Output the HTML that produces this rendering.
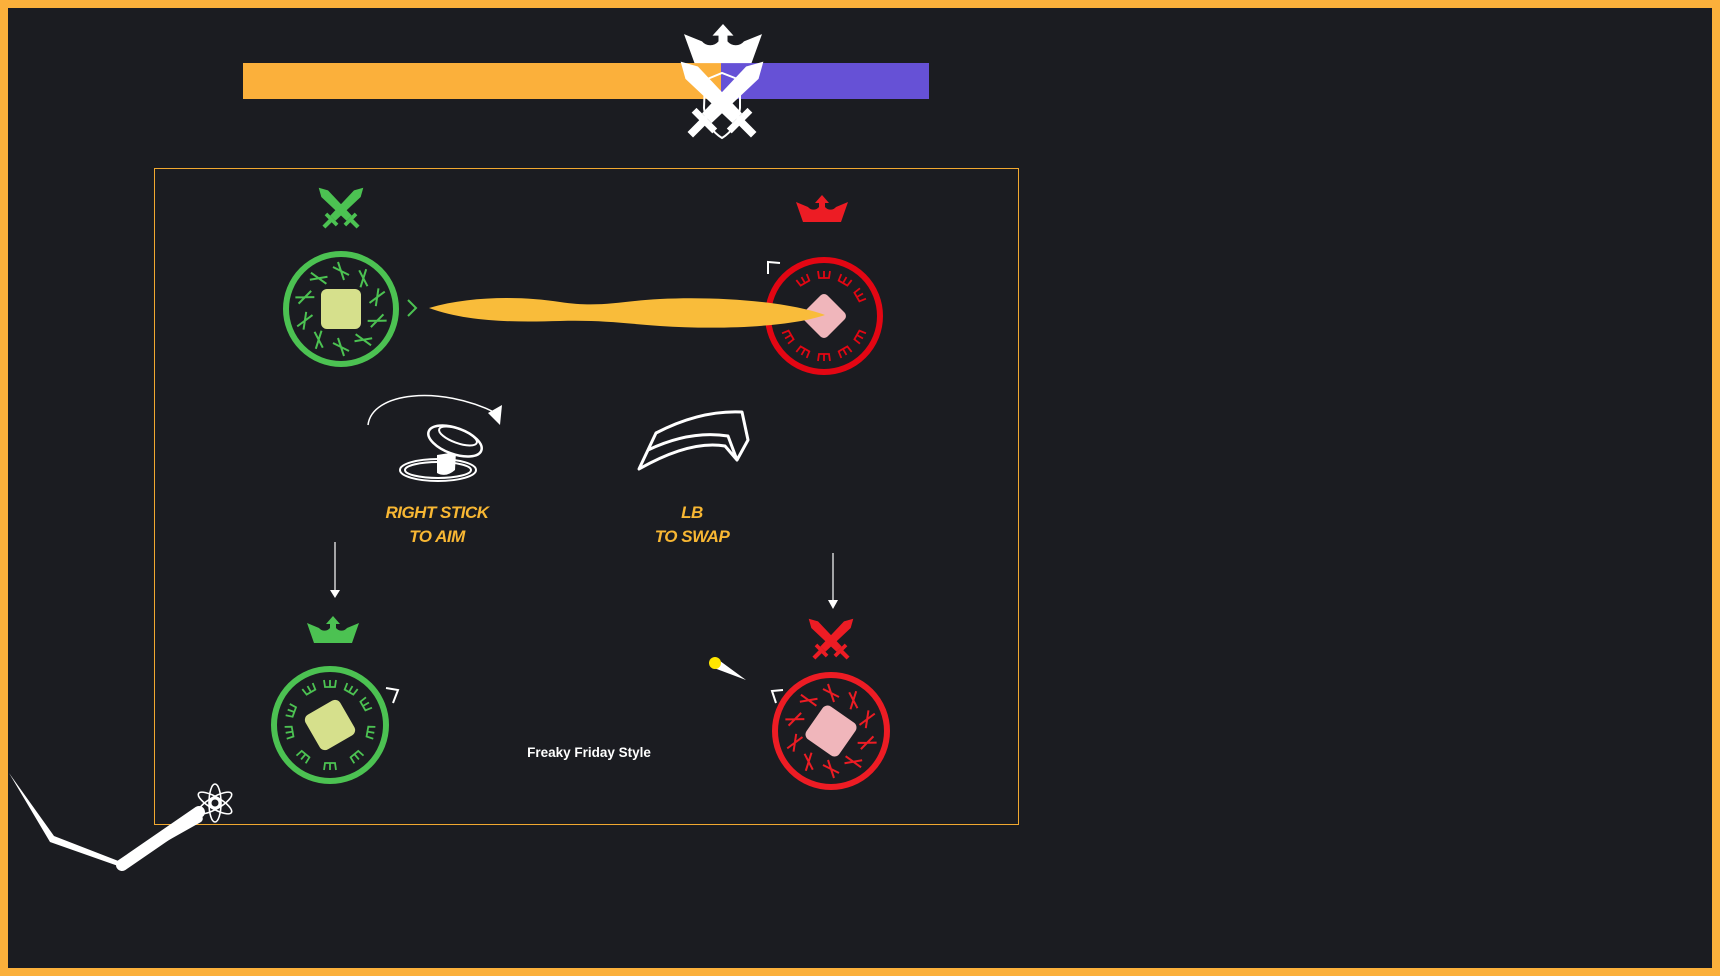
<!DOCTYPE html>
<html><head><meta charset="utf-8"><style>
html,body{margin:0;padding:0;background:#1b1c21;}
body{width:1720px;height:976px;overflow:hidden;position:relative;}
svg{position:absolute;left:0;top:0;}
.t{font-family:"Liberation Sans",sans-serif;}
</style></head><body>
<svg width="1720" height="976" viewBox="0 0 1720 976" xmlns="http://www.w3.org/2000/svg">
<defs>
<g id="sw"><path d="M0,-30 L4.5,-22 L3.5,11 L-3.5,11 L-4.5,-22 Z"/><rect x="-7.5" y="11" width="15" height="3.5"/><rect x="-2" y="14" width="4" height="9"/></g>
<g id="sws"><use href="#sw" transform="rotate(-45)"/><use href="#sw" transform="rotate(45)"/></g>
<path id="crown" d="M0,7 L12,12 A7,7 0 0 0 23,12 L23,8 L19,8 L26,0 L33,8 L29,8 L29,12 A7,7 0 0 0 40,12 L52,7 L45,27 L7,27 Z"/>
<g id="xm" fill="none" stroke-width="2"><path d="M-8,-4 L8,4 M-3,-9 L3,9"/></g>
<g id="tk" fill="none" stroke-width="1.8"><path d="M-6,-5 L-5,2 L5,2 L6,-5 M0,2 L0,-5"/></g>
</defs>
<rect x="4" y="4" width="1712" height="968" fill="none" stroke="#fbb03b" stroke-width="8"/>
<rect x="243" y="63" width="478" height="36" fill="#fbb03b"/>
<rect x="721" y="63" width="208" height="36" fill="#6651d6"/>
<g fill="#fff"><use href="#crown" transform="translate(684,24) scale(1.5,1.45)"/></g>
<path d="M705,80 L722,73 L740,80 L740,108 Q738,128 722,138 Q706,128 704,108 Z" fill="none" stroke="#fff" stroke-width="2"/>
<g fill="#fff" transform="translate(722,103) scale(1.95)"><use href="#sws"/></g>
<rect x="154.5" y="168.5" width="864" height="656" fill="none" stroke="#f0a830" stroke-width="1"/>
<g fill="#4cc252" transform="translate(341,210) scale(1.05)"><use href="#sws"/></g>
<circle cx="341" cy="309" r="55" fill="none" stroke="#4cc252" stroke-width="6"/>
<rect x="321" y="289" width="40" height="40" rx="6" fill="#d6e08c"/>
<g stroke="#4cc252" transform="translate(341,309)">
<use href="#xm" transform="rotate(0) translate(0,-38)"/><use href="#xm" transform="rotate(36) translate(0,-38)"/><use href="#xm" transform="rotate(72) translate(0,-38)"/><use href="#xm" transform="rotate(108) translate(0,-38)"/><use href="#xm" transform="rotate(144) translate(0,-38)"/><use href="#xm" transform="rotate(180) translate(0,-38)"/><use href="#xm" transform="rotate(216) translate(0,-38)"/><use href="#xm" transform="rotate(252) translate(0,-38)"/><use href="#xm" transform="rotate(288) translate(0,-38)"/><use href="#xm" transform="rotate(324) translate(0,-38)"/>
</g>
<path d="M408,300 L416,308 L408,316" fill="none" stroke="#4cc252" stroke-width="2"/>
<g fill="#ed1c24"><use href="#crown" transform="translate(796,195)"/></g>
<circle cx="824" cy="316" r="56" fill="none" stroke="#e30613" stroke-width="6"/>
<g stroke="#e30613" transform="translate(824,316)">
<use href="#tk" transform="rotate(-30) translate(0,-40)"/><use href="#tk" transform="rotate(0) translate(0,-40)"/><use href="#tk" transform="rotate(30) translate(0,-40)"/><use href="#tk" transform="rotate(60) translate(0,-40)"/><use href="#tk" transform="rotate(120) translate(0,-40)"/><use href="#tk" transform="rotate(150) translate(0,-40)"/><use href="#tk" transform="rotate(180) translate(0,-40)"/><use href="#tk" transform="rotate(210) translate(0,-40)"/><use href="#tk" transform="rotate(240) translate(0,-40)"/><use href="#tk" transform="rotate(270) translate(0,-40)"/>
</g>
<rect x="807" y="299" width="34" height="34" rx="5" fill="#f0b6bb" transform="rotate(45 824 316)"/>
<path d="M429,308 C470,296 520,296 560,302 C600,308 620,301 660,299 C720,296 790,302 825,315 C790,327 720,330 660,326 C620,323 600,320 560,321 C520,322 470,323 429,308 Z" fill="#f9bc3a"/>
<path d="M768,274 L768,262 L780,263" fill="none" stroke="#fff" stroke-width="2"/>
<path d="M368,425 C372,392 440,385 496,413" fill="none" stroke="#fff" stroke-width="1.5"/>
<path d="M488,413 L502,405 L500,425 Z" fill="#fff"/>
<ellipse cx="438" cy="470" rx="38" ry="11" fill="none" stroke="#fff" stroke-width="2"/>
<ellipse cx="438" cy="470" rx="33" ry="8" fill="none" stroke="#fff" stroke-width="2"/>
<path d="M437,455 L456,452 L455,470 Q446,478 437,473 Z" fill="#fff"/>
<ellipse cx="455" cy="441" rx="28" ry="13" transform="rotate(20 455 441)" fill="#1b1c21" stroke="#fff" stroke-width="2.5"/>
<ellipse cx="458" cy="436" rx="20" ry="7" transform="rotate(20 458 436)" fill="none" stroke="#fff" stroke-width="2"/>
<path d="M639,469 L656,433 Q700,410 742,412 L748,440 L737,460 L725,446 Q690,440 639,469 Z M648,450 Q690,430 728,436 L737,460" fill="none" stroke="#fff" stroke-width="3" stroke-linejoin="round"/>
<g class="t" fill="#f8b733" font-weight="bold" font-style="italic" font-size="17" text-anchor="middle" style="letter-spacing:-0.5px">
<text x="437" y="518">RIGHT STICK</text><text x="437" y="542">TO AIM</text>
<text x="692" y="518">LB</text><text x="692" y="542">TO SWAP</text>
</g>
<text class="t" x="589" y="757" fill="#fff" font-size="13.5" font-weight="bold" text-anchor="middle">Freaky Friday Style</text>
<line x1="335" y1="542" x2="335" y2="592" stroke="#fff" stroke-width="1.2"/><path d="M330,590 L340,590 L335,598 Z" fill="#fff"/>
<line x1="833" y1="553" x2="833" y2="602" stroke="#fff" stroke-width="1.2"/><path d="M828,600 L838,600 L833,609 Z" fill="#fff"/>
<g fill="#4cc252"><use href="#crown" transform="translate(307,616)"/></g>
<circle cx="330" cy="725" r="56" fill="none" stroke="#4cc252" stroke-width="6"/>
<g stroke="#4cc252" transform="translate(330,725)">
<use href="#tk" transform="rotate(-30) translate(0,-40)"/><use href="#tk" transform="rotate(0) translate(0,-40)"/><use href="#tk" transform="rotate(30) translate(0,-40)"/><use href="#tk" transform="rotate(60) translate(0,-40)"/><use href="#tk" transform="rotate(100) translate(0,-40)"/><use href="#tk" transform="rotate(140) translate(0,-40)"/><use href="#tk" transform="rotate(180) translate(0,-40)"/><use href="#tk" transform="rotate(220) translate(0,-40)"/><use href="#tk" transform="rotate(260) translate(0,-40)"/><use href="#tk" transform="rotate(-70) translate(0,-40)"/>
</g>
<rect x="310" y="705" width="40" height="40" rx="6" fill="#d6e08c" transform="rotate(-30 330 725)"/>
<path d="M386,688 L398,690 L393,703" fill="none" stroke="#fff" stroke-width="2"/>
<g fill="#ed1c24" transform="translate(831,641) scale(1.05)"><use href="#sws"/></g>
<circle cx="831" cy="731" r="56" fill="none" stroke="#ed1c24" stroke-width="6"/>
<g stroke="#ed1c24" transform="translate(831,731)">
<use href="#xm" transform="rotate(0) translate(0,-38)"/><use href="#xm" transform="rotate(36) translate(0,-38)"/><use href="#xm" transform="rotate(72) translate(0,-38)"/><use href="#xm" transform="rotate(108) translate(0,-38)"/><use href="#xm" transform="rotate(144) translate(0,-38)"/><use href="#xm" transform="rotate(180) translate(0,-38)"/><use href="#xm" transform="rotate(216) translate(0,-38)"/><use href="#xm" transform="rotate(252) translate(0,-38)"/><use href="#xm" transform="rotate(288) translate(0,-38)"/><use href="#xm" transform="rotate(324) translate(0,-38)"/>
</g>
<rect x="811" y="711" width="40" height="40" rx="6" fill="#f0b6bb" transform="rotate(35 831 731)"/>
<path d="M776,703 L772,691 L783,690" fill="none" stroke="#fff" stroke-width="2"/>
<path d="M714,668 L746,680 L716,658 Z" fill="#fff"/>
<circle cx="715" cy="663" r="6" fill="#ffe600"/>
<path d="M9,773 L54,836 L121,862 L197,810 Q206,818 201,822 L121,867 L50,842 Z" fill="#fff"/>
<path d="M199,812 L122,865" stroke="#fff" stroke-width="12" stroke-linecap="round"/>
<g fill="none" stroke="#fff" stroke-width="1.6" transform="translate(215,803)">
<ellipse rx="6" ry="19"/><ellipse rx="6" ry="19" transform="rotate(60)"/><ellipse rx="6" ry="19" transform="rotate(-60)"/><circle r="5" stroke-width="3"/>
</g>
</svg>
</body></html>
